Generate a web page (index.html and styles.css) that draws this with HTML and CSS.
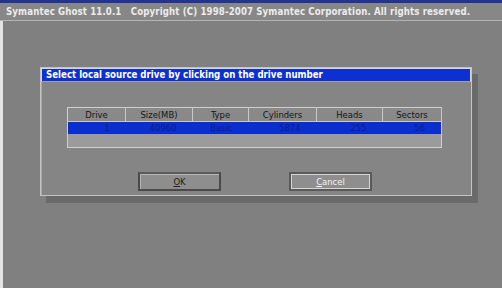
FILE: index.html
```html
<!DOCTYPE html>
<html lang="en">
<head>
    <meta charset="UTF-8">
    <title>Symantec Ghost 11.0.1</title>
    <link rel="stylesheet" href="styles.css">
</head>
<body>

<div class="topline"></div>
<div class="appbar">Symantec Ghost 11.0.1&nbsp;&nbsp;&nbsp;Copyright (C) 1998-2007 Symantec Corporation. All rights reserved.</div>

<div class="desk">
    <div class="dialog">
        <div class="dialog-title">Select local source drive by clicking on the drive number</div>
        <div class="dialog-body">
            <table class="drives">
                <tr>
                    <th class="col-drive">Drive</th>
                    <th class="col-size">Size(MB)</th>
                    <th class="col-type">Type</th>
                    <th class="col-cyl">Cylinders</th>
                    <th class="col-heads">Heads</th>
                    <th>Sectors</th>
                </tr>
                <tr class="selected">
                    <td>1</td>
                    <td>40960</td>
                    <td>Basic</td>
                    <td>5874</td>
                    <td>255</td>
                    <td>56</td>
                </tr>
                <tr class="empty">
                    <td colspan="6"></td>
                </tr>
            </table>

            <div class="buttons">
                <button class="btn btn-ok"><u>O</u>K</button>
                <button class="btn btn-cancel"><u>C</u>ancel</button>
            </div>
        </div>
    </div>
</div>

</body>
</html>
```

FILE: styles.css
```css
body, html {
    margin: 0;
    padding: 0;
    width: 502px;
    height: 288px;
    overflow: hidden;
    background-color: #808080;
    font-family: "DejaVu Sans Condensed", "DejaVu Sans", sans-serif;
}

.topline {
    height: 3px;
    background-color: #22348f;
}

.appbar {
    height: 17px;
    line-height: 17px;
    padding-left: 6px;
    background-color: #878787;
    color: #ececec;
    font-weight: bold;
    font-size: 9.6px;
    letter-spacing: 0.12px;
    white-space: nowrap;
    border-bottom: 1px solid #b4b4b4;
}

.desk {
    height: 267px;
    padding: 46px 0 0 37px;
    border-left: 3px solid #e4e4e4;
    box-sizing: border-box;
}

.dialog {
    width: 432px;
    background-color: #858585;
    border: 1px solid #c4c4c4;
    box-shadow: 6px 7px 0 #6a6a6a;
    box-sizing: border-box;
}

.dialog-title {
    height: 14px;
    line-height: 12px;
    padding-left: 4px;
    background-color: #0c30d2;
    color: #ffffff;
    font-weight: bold;
    font-size: 9.6px;
    border: 1px solid #d8d8d8;
    border-bottom-color: #a0a0a0;
    white-space: nowrap;
    box-sizing: border-box;
}

.dialog-body {
    height: 113px;
    padding: 25px 0 0 25px;
    border-left: 1px solid #a8a8a8;
    box-sizing: border-box;
}

.drives {
    width: 375px;
    border-collapse: collapse;
    border: 1px solid #cfcfcf;
    font-size: 9.4px;
    table-layout: fixed;
}

.drives th {
    height: 13px;
    padding: 0;
    font-weight: normal;
    color: #141414;
    background-color: #898989;
    border-right: 1px solid #c8c8c8;
    border-bottom: 1px solid #c8c8c8;
    text-align: center;
    line-height: 12px;
}

.col-drive { width: 57px; }
.col-size { width: 66px; }
.col-type { width: 55px; }
.col-cyl { width: 67px; }
.col-heads { width: 65px; }

.selected td {
    height: 12px;
    padding: 0 16px 0 0;
    line-height: 12px;
    background-color: #0b2fcf;
    color: #0a1c8a;
    text-align: right;
}

.empty td {
    height: 13px;
    padding: 0;
    background-color: #9b9b9b;
}

.buttons {
    display: flex;
    gap: 68px;
    margin: 24px 0 0 71px;
}

.btn {
    width: 83px;
    height: 19px;
    padding: 0;
    font-family: "DejaVu Sans Condensed", "DejaVu Sans", sans-serif;
    font-size: 9.4px;
    background-color: #8e8e8e;
    box-sizing: border-box;
}

.btn-ok {
    color: #202020;
    border: 2px solid #4a4a4a;
    border-top-color: #5a5a5a;
    box-shadow: inset 1px 1px 0 #b4b4b4;
}

.btn-cancel {
    color: #f4f4f4;
    border: 2px solid #5a5a5a;
    box-shadow: inset 0 0 0 1px #d6d6d6;
}
```
